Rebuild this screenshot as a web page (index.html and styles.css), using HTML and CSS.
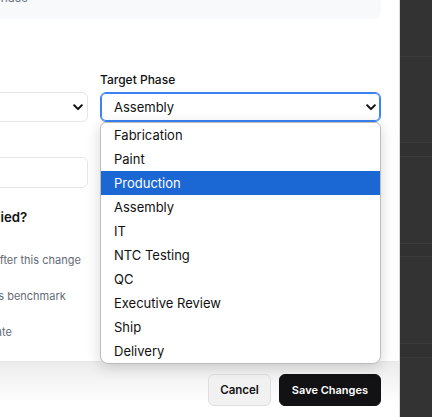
FILE: index.html
```html
<!DOCTYPE html>
<html lang="en">
<head>
<meta charset="utf-8">
<title>Change Phase</title>
<link rel="stylesheet" href="styles.css">
</head>
<body>
<div class="stage">
  <div class="modal">
    <div class="modal-body">
      <div class="info">All dates will shift into the new phase</div>
      <div class="fields">
        <div class="field">
          <label class="label">Current Phase</label>
          <div class="select"><span>Production</span><svg class="chev" viewBox="0 0 10 7" width="10" height="7"><path d="M1.2 1.3 L5 5.1 L8.8 1.3" fill="none" stroke="#111" stroke-width="2" stroke-linecap="round" stroke-linejoin="round"/></svg></div>
        </div>
        <div class="field target">
          <label class="label">Target Phase</label>
          <div class="select focus"><span>Assembly</span><svg class="chev" viewBox="0 0 10 7" width="10" height="7"><path d="M1.2 1.3 L5 5.1 L8.8 1.3" fill="none" stroke="#111" stroke-width="2" stroke-linecap="round" stroke-linejoin="round"/></svg></div>
          <ul class="menu">
            <li>Fabrication</li>
            <li>Paint</li>
            <li class="active">Production</li>
            <li>Assembly</li>
            <li>IT</li>
            <li>NTC Testing</li>
            <li>QC</li>
            <li>Executive Review</li>
            <li>Ship</li>
            <li>Delivery</li>
          </ul>
        </div>
        <div class="field">
          <label class="label">Reason</label>
          <div class="input"></div>
        </div>
      </div>
      <div class="apply">
        <div class="question">How should the dates get applied?</div>
        <div class="options">
          <div class="option"><span class="radio"></span><div><div class="opt-label">Shift forward</div><div class="opt-desc">Shift every new task scheduled after this change</div></div></div>
          <div class="option"><span class="radio"></span><div><div class="opt-label">Benchmark</div><div class="opt-desc">Reset the dates using the process benchmark</div></div></div>
          <div class="option"><span class="radio"></span><div><div class="opt-label">Keep dates</div><div class="opt-desc">Keep the current delivery start date</div></div></div>
        </div>
      </div>
    </div>
    <div class="footer">
      <button class="btn btn-cancel">Cancel</button>
      <button class="btn btn-save">Save Changes</button>
    </div>
  </div>
  <div class="backdrop">
    <div class="row r1"></div>
    <div class="row r2"></div>
    <div class="row r3"></div>
    <div class="row r4"></div>
    <div class="row r5"></div>
    <div class="row r6"></div>
    <div class="row r7"></div>
    <div class="row r8"></div>
  </div>
</div>
</body>
</html>
```

FILE: styles.css
```css
html, body {
  margin: 0;
  padding: 0;
  height: 417px;
  overflow: hidden;
  background: #333333;
  font-family: Inter, "Noto Sans", sans-serif;
  color: #111111;
}

.stage {
  display: flex;
  height: 417px;
}

.modal {
  flex: none;
  width: 613px;
  height: 460px;
  margin-left: -213px;
  margin-top: -20px;
  background: #ffffff;
  border-right: 1px solid #d9d9d9;
  box-sizing: border-box;
  display: flex;
  flex-direction: column;
}

.modal-body {
  padding: 0 18px 21px 20px;
}

.info {
  background: #f8f9fb;
  border-radius: 8px;
  padding: 10px 12px 13px;
  font-size: 12px;
  line-height: 16px;
  color: #6b7280;
}

.fields {
  margin-top: 53px;
  display: grid;
  grid-template-columns: 1fr 1fr;
  column-gap: 12px;
  row-gap: 15px;
}

.field {
  display: flex;
  flex-direction: column;
}

.field.target {
  position: relative;
}

.label {
  display: block;
  font-size: 12px;
  line-height: 16px;
  font-weight: 500;
  color: #111111;
  margin-bottom: 4px;
}

.select {
  height: 30px;
  box-sizing: border-box;
  border: 1px solid #e4e6ea;
  border-radius: 6px;
  display: flex;
  align-items: center;
  justify-content: space-between;
  padding: 0 4px 0 13px;
  font-size: 13px;
  color: #111111;
  background: #ffffff;
}

.select.focus {
  border-color: #3b82f6;
  box-shadow: inset 0 0 0 1px #3b82f6;
}

.chev {
  display: block;
}

.input {
  height: 31px;
  box-sizing: border-box;
  border: 1px solid #e4e6ea;
  border-radius: 6px;
}

.menu {
  position: absolute;
  left: 0;
  right: 0;
  top: 100%;
  margin: 0;
  padding: 0;
  list-style: none;
  background: #ffffff;
  border: 1px solid #bdbdbd;
  border-radius: 6px 6px 8px 8px;
  box-shadow: 0 3px 14px rgba(0, 0, 0, 0.16);
  z-index: 10;
  overflow: hidden;
}

.menu li {
  height: 24px;
  line-height: 24px;
  padding-left: 13px;
  font-size: 13px;
  color: #111111;
}

.menu li.active {
  background: #1b67d3;
  color: #ffffff;
}

.apply {
  margin-top: 20px;
}

.question {
  font-size: 13.25px;
  line-height: 18px;
  font-weight: 600;
  color: #111111;
  margin-bottom: 8px;
}

.options {
  display: flex;
  flex-direction: column;
  gap: 2px;
}

.option {
  display: flex;
  gap: 7px;
}

.radio {
  flex: none;
  width: 14px;
  height: 14px;
  margin-top: 2px;
  border: 1px solid #9ca3af;
  border-radius: 50%;
  box-sizing: border-box;
}

.opt-label {
  font-size: 13px;
  line-height: 18px;
  font-weight: 500;
}

.opt-desc {
  font-size: 11px;
  line-height: 16px;
  color: #646b76;
}

.footer {
  border-top: 1px solid #e5e7eb;
  padding: 12px 18px 12px 20px;
  display: flex;
  justify-content: flex-end;
  gap: 8px;
  background: linear-gradient(to bottom, #ececec, #ffffff 42px);
}

.btn {
  height: 32px;
  box-sizing: border-box;
  border-radius: 6px;
  font-family: Inter, "Noto Sans", sans-serif;
  font-weight: 600;
}

.btn-cancel {
  padding: 0 11px;
  font-size: 11.5px;
  background: #f1f1f1;
  border: 1px solid #dedede;
  color: #111111;
}

.btn-save {
  padding: 0 12px;
  font-size: 11px;
  background: #121214;
  border: 1px solid #121214;
  color: #ffffff;
}

.backdrop {
  flex: 1;
  display: flex;
  flex-direction: column;
  background: #333333;
}

.row {
  flex: none;
  border-bottom: 1px solid #3b3b3b;
}

.r1 { height: 56px; }
.r2 { height: 85px; }
.r3 { height: 13px; background: #313131; }
.r4 { height: 86px; }
.r5 { height: 12px; background: #313131; }
.r6 { height: 86px; }
.r7 { height: 13px; background: #313131; }
.r8 { flex: 1; border-bottom: none; }
```
